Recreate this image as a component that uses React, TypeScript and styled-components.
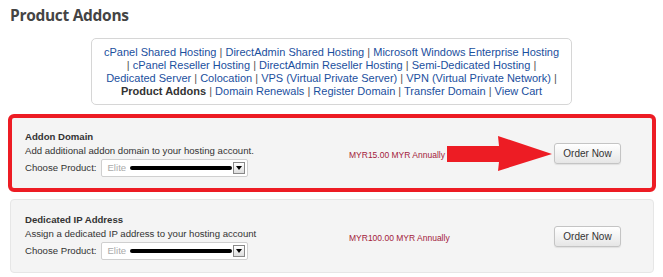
import React from "react"
import styled, { createGlobalStyle } from "styled-components"

const GlobalStyle = createGlobalStyle`
  body {
    margin: 0;
    background: #fff;
    font-family: "Liberation Sans", Arial, sans-serif;
  }
`

interface Addon {
  name: string
  description: string
  price: string
  highlight?: boolean
}

// "|" stands for a separator, everything else is a link
const navLines: string[][] = [
  ["cPanel Shared Hosting", "|", "DirectAdmin Shared Hosting", "|", "Microsoft Windows Enterprise Hosting"],
  ["|", "cPanel Reseller Hosting", "|", "DirectAdmin Reseller Hosting", "|", "Semi-Dedicated Hosting", "|"],
  ["Dedicated Server", "|", "Colocation", "|", "VPS (Virtual Private Server)", "|", "VPN (Virtual Private Network)", "|"],
  ["Product Addons", "|", "Domain Renewals", "|", "Register Domain", "|", "Transfer Domain", "|", "View Cart"],
]

const currentPage = "Product Addons"

const addons: Addon[] = [
  {
    name: "Addon Domain",
    description: "Add additional addon domain to your hosting account.",
    price: "MYR15.00 MYR Annually",
    highlight: true,
  },
  {
    name: "Dedicated IP Address",
    description: "Assign a dedicated IP address to your hosting account",
    price: "MYR100.00 MYR Annually",
  },
]

const S = {
  Page: styled.div`
    padding: 4px 4px 0 10px;
  `,

  Title: styled.h1`
    margin: 0;
    font-family: "Open Sans", sans-serif;
    font-size: 15.5px;
    font-weight: 700;
    letter-spacing: -0.3px;
    color: #444;
    line-height: 22px;
  `,

  Nav: styled.div`
    width: 467px;
    margin: 12px 0 0 81px;
    padding: 7px 6px 6px;
    border: 1px solid #d6d6d6;
    border-radius: 5px;
    text-align: center;
    font-size: 11px;
    line-height: 13px;
    color: #333;
    white-space: nowrap;
  `,

  NavLine: styled.div``,

  NavLink: styled.a<{ $current?: boolean }>`
    color: ${(p) => (p.$current ? "#333" : "#1b4f9e")};
    font-weight: ${(p) => (p.$current ? 700 : 400)};
    text-decoration: none;
  `,

  Sep: styled.span`
    color: #555;
  `,

  List: styled.div`
    display: flex;
    flex-direction: column;
    gap: 9px;
    margin-top: 11px;
    margin-right: 5px;
  `,

  Card: styled.div<{ $highlight?: boolean }>`
    position: relative;
    display: grid;
    grid-template-columns: 324px 205px auto;
    align-items: center;
    height: 74px;
    box-sizing: border-box;
    padding: 0 14px;
    background: #f4f4f4;
    border: 1px solid #e6e6e6;
    border-radius: 4px;
    outline: ${(p) => (p.$highlight ? "4px solid #ed1c24" : "none")};
    outline-offset: -2px;
  `,

  Info: styled.div`
    font-size: 9.6px;
    color: #333;
    line-height: 14px;
  `,

  Name: styled.div`
    font-weight: 700;
  `,

  Desc: styled.div``,

  Choose: styled.div`
    display: flex;
    align-items: center;
    gap: 5px;
    margin-top: 1px;
  `,

  Select: styled.div`
    display: flex;
    align-items: center;
    width: 147px;
    height: 18px;
    box-sizing: border-box;
    padding: 0 2px 0 5px;
    background: #fff;
    border: 1px solid #cfcfcf;
    border-radius: 2px;
    color: #aaa;
  `,

  Redact: styled.span`
    flex: 1;
    height: 4px;
    margin: 1px 1px 0 4px;
    background: #000;
    border-radius: 2px;
  `,

  Drop: styled.span`
    display: flex;
    align-items: center;
    justify-content: center;
    width: 12px;
    height: 12px;
    box-sizing: border-box;
    border: 1px solid #888;
    background: linear-gradient(#fff, #ddd);
  `,

  Price: styled.div`
    font-size: 8.5px;
    color: #a3203a;
    margin-top: 3px;
  `,

  Button: styled.button`
    width: 67px;
    height: 21px;
    padding: 0;
    font-family: "Liberation Sans", Arial, sans-serif;
    font-size: 10px;
    color: #333;
    background: linear-gradient(#ffffff, #e6e6e6);
    border: 1px solid #c4c4c4;
    border-radius: 3px;
    box-shadow: 0 1px 1px rgba(0, 0, 0, 0.08);
    cursor: pointer;
  `,

  Arrow: styled.svg`
    position: absolute;
    left: 436px;
    top: 19px;
  `,
}

const RedArrow = () => (
  <S.Arrow width="106" height="36" viewBox="0 0 106 36">
    <polygon points="0,10 52,10 51,0 105,18 51,35 52,26 0,26" fill="#ed1c24" />
  </S.Arrow>
)

const NavMenu = () => (
  <S.Nav>
    {navLines.map((line, i) => (
      <S.NavLine key={i}>
        {line.map((item, j) => (
          <React.Fragment key={j}>
            {j > 0 && " "}
            {item === "|" ? (
              <S.Sep>|</S.Sep>
            ) : (
              <S.NavLink href="#" $current={item === currentPage}>
                {item}
              </S.NavLink>
            )}
          </React.Fragment>
        ))}
      </S.NavLine>
    ))}
  </S.Nav>
)

export default function App() {
  return (
    <>
      <GlobalStyle />
      <S.Page>
        <S.Title>Product Addons</S.Title>
        <NavMenu />
        <S.List>
          {addons.map((a) => (
            <S.Card key={a.name} $highlight={a.highlight}>
              <S.Info>
                <S.Name>{a.name}</S.Name>
                <S.Desc>{a.description}</S.Desc>
                <S.Choose>
                  Choose Product:
                  <S.Select>
                    Elite
                    <S.Redact />
                    <S.Drop>
                      <svg width="6" height="4" viewBox="0 0 6 4">
                        <polygon points="0,0 6,0 3,4" fill="#000" />
                      </svg>
                    </S.Drop>
                  </S.Select>
                </S.Choose>
              </S.Info>
              <S.Price>{a.price}</S.Price>
              <div>
                <S.Button>Order Now</S.Button>
              </div>
              {a.highlight && <RedArrow />}
            </S.Card>
          ))}
        </S.List>
      </S.Page>
    </>
  )
}
